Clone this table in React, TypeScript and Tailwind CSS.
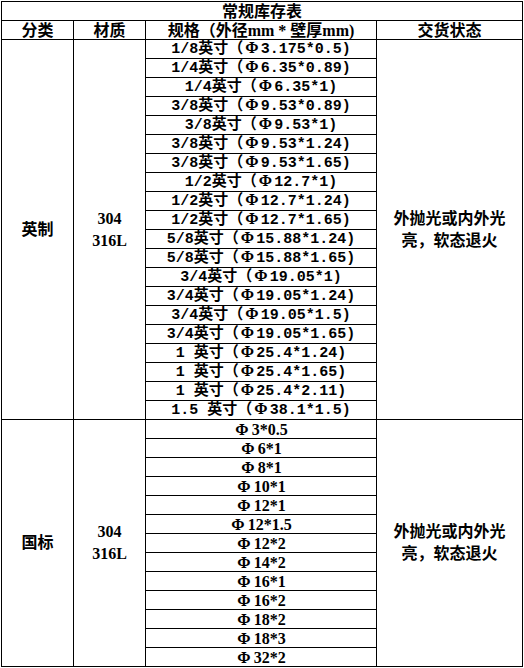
const imperial = [
  "1/8英寸（Φ3.175*0.5)",
  "1/4英寸（Φ6.35*0.89)",
  "1/4英寸（Φ6.35*1)",
  "3/8英寸（Φ9.53*0.89)",
  "3/8英寸（Φ9.53*1)",
  "3/8英寸（Φ9.53*1.24)",
  "3/8英寸（Φ9.53*1.65)",
  "1/2英寸（Φ12.7*1)",
  "1/2英寸（Φ12.7*1.24)",
  "1/2英寸（Φ12.7*1.65)",
  "5/8英寸（Φ15.88*1.24)",
  "5/8英寸（Φ15.88*1.65)",
  "3/4英寸（Φ19.05*1)",
  "3/4英寸（Φ19.05*1.24)",
  "3/4英寸（Φ19.05*1.5)",
  "3/4英寸（Φ19.05*1.65)",
  "1 英寸（Φ25.4*1.24)",
  "1 英寸（Φ25.4*1.65)",
  "1 英寸（Φ25.4*2.11)",
  "1.5 英寸（Φ38.1*1.5)",
];

const national = [
  "Φ3*0.5",
  "Φ6*1",
  "Φ8*1",
  "Φ10*1",
  "Φ12*1",
  "Φ12*1.5",
  "Φ12*2",
  "Φ14*2",
  "Φ16*1",
  "Φ16*2",
  "Φ18*2",
  "Φ18*3",
  "Φ32*2",
];

const cell = "border border-black p-0 text-center";
const serif = "font-['Liberation_Serif','Noto_Sans_CJK_SC',serif]";
const mono = "font-['Liberation_Mono','Noto_Sans_CJK_SC',monospace]";

// Φ is drawn full width in the sheet, so pad it out
function Spec({ text, phiClass }: { text: string; phiClass: string }) {
  const [before, after] = text.split("Φ");
  return (
    <>
      {before}
      <span className={`text-[16px] leading-[10px] font-['Liberation_Serif',serif] ${phiClass}`}>Φ</span>
      {after}
    </>
  );
}

function Group({
  name,
  rows,
  rowClass,
  phiClass,
}: {
  name: string;
  rows: string[];
  rowClass: string;
  phiClass: string;
}) {
  return (
    <>
      {rows.map((r, i) => (
        <tr key={r} className="h-[19px]">
          {i === 0 && (
            <>
              <td rowSpan={rows.length} className={`${cell} align-middle text-[16px] ${serif}`}>
                {name}
              </td>
              <td rowSpan={rows.length} className={`${cell} align-middle text-[16px] leading-[22px] ${serif}`}>
                304
                <br />
                316L
              </td>
            </>
          )}
          <td className={`${cell} h-[19px] align-bottom leading-[17px] whitespace-pre ${rowClass}`}>
            <Spec text={r} phiClass={phiClass} />
          </td>
          {i === 0 && (
            <td rowSpan={rows.length} className={`${cell} align-middle text-[16px] leading-[22px] ${serif}`}>
              外抛光或内外光
              <br />
              亮，软态退火
            </td>
          )}
        </tr>
      ))}
    </>
  );
}

export default function App() {
  return (
    <div className="bg-white w-[524px] h-[668px] pl-[1px] pt-[1px] text-black font-bold">
      <table className="table-fixed border-collapse w-[521px]">
        <colgroup>
          <col className="w-[72px]" />
          <col className="w-[72px]" />
          <col className="w-[231px]" />
          <col className="w-[146px]" />
        </colgroup>
        <tbody>
          <tr className="h-[19px]">
            <td colSpan={4} className={`${cell} align-bottom text-[16px] leading-[17px] ${serif}`}>
              常规库存表
            </td>
          </tr>
          <tr className="h-[19px]">
            {["分类", "材质", "规格（外径mm * 壁厚mm)", "交货状态"].map((h) => (
              <td key={h} className={`${cell} align-bottom text-[16px] leading-[17px] ${serif}`}>
                {h}
              </td>
            ))}
          </tr>
          <Group name="英制" rows={imperial} rowClass={`text-[15px] ${mono}`} phiClass="px-[2px]" />
          <Group name="国标" rows={national} rowClass={`text-[16px] ${serif}`} phiClass="pl-[1px] pr-[3px]" />
        </tbody>
      </table>
    </div>
  );
}
